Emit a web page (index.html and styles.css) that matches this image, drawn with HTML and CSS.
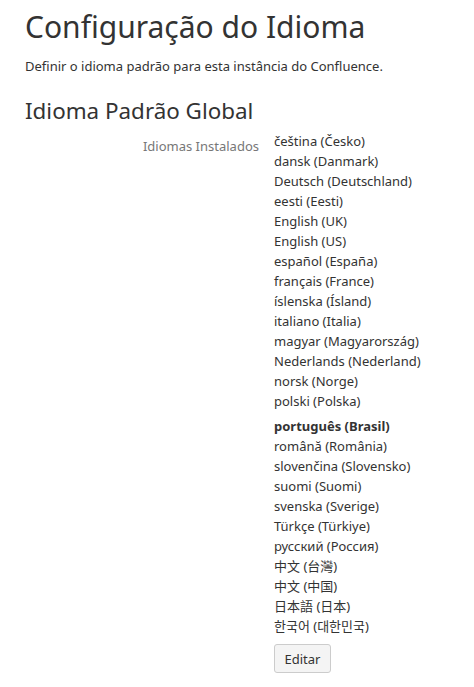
FILE: index.html
```html
<!DOCTYPE html>
<html lang="pt-BR">
<head>
<meta charset="utf-8">
<title>Configuração do Idioma</title>
<link rel="stylesheet" href="styles.css">
</head>
<body>
<div class="page">
  <h1 class="title">Configuração do Idioma</h1>
  <p class="intro">Definir o idioma padrão para esta instância do Confluence.</p>
  <h2 class="section">Idioma Padrão Global</h2>
  <div class="field">
    <div class="label">Idiomas Instalados</div>
    <div class="value">
      <ul class="langs">
        <li>čeština (Česko)</li>
        <li>dansk (Danmark)</li>
        <li>Deutsch (Deutschland)</li>
        <li>eesti (Eesti)</li>
        <li>English (UK)</li>
        <li>English (US)</li>
        <li>español (España)</li>
        <li>français (France)</li>
        <li>íslenska (Ísland)</li>
        <li>italiano (Italia)</li>
        <li>magyar (Magyarország)</li>
        <li>Nederlands (Nederland)</li>
        <li>norsk (Norge)</li>
        <li>polski (Polska)</li>
        <li class="current">português (Brasil)</li>
        <li>română (România)</li>
        <li>slovenčina (Slovensko)</li>
        <li>suomi (Suomi)</li>
        <li>svenska (Sverige)</li>
        <li>Türkçe (Türkiye)</li>
        <li>русский (Россия)</li>
        <li>中文 (台灣)</li>
        <li>中文 (中国)</li>
        <li>日本語 (日本)</li>
        <li>한국어 (대한민국)</li>
      </ul>
      <button class="btn" type="button">Editar</button>
    </div>
  </div>
</div>
</body>
</html>
```

FILE: styles.css
```css
html, body {
  margin: 0;
  padding: 0;
  background: #fff;
}
body {
  font-family: "Noto Sans", "Noto Sans CJK SC", sans-serif;
  color: #333;
  font-size: 13px;
}
.page {
  padding: 7px 25px 0 25px;
}
.title {
  margin: 0;
  font-size: 30px;
  font-weight: 400;
  line-height: 40px;
  color: #333;
}
.intro {
  margin: 9px 0 0 0;
  font-size: 13px;
  line-height: 20px;
}
.section {
  margin: 21px 0 0 0;
  font-size: 22.4px;
  font-weight: 400;
  line-height: 28px;
}
.field {
  display: flex;
  margin-top: 6px;
}
.label {
  width: 234px;
  flex: none;
  text-align: right;
  color: #777;
  padding-top: 5px;
  line-height: 20px;
}
.value {
  margin-left: 15px;
}
.langs {
  list-style: none;
  margin: 0;
  padding: 0;
}
.langs li {
  line-height: 20px;
}
.langs li.current {
  font-weight: 700;
  margin-top: 5px;
}
.btn {
  margin-top: 8px;
  width: 57px;
  height: 29px;
  font-family: inherit;
  font-size: 13px;
  color: #333;
  background: #f4f4f4;
  border: 1px solid #ccc;
  border-radius: 3px;
  padding: 0;
}
```
